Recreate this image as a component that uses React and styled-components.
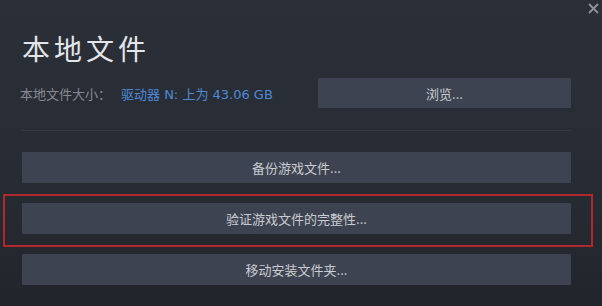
import styled, { createGlobalStyle } from "styled-components";

const GlobalStyle = createGlobalStyle`
  html, body {
    margin: 0;
    padding: 0;
    background: #262a31;
  }
  * {
    box-sizing: border-box;
  }
`;

const Window = styled.div`
  position: relative;
  width: 602px;
  height: 306px;
  overflow: hidden;
  padding: 30px 31px 0 22px;
  background: linear-gradient(180deg, #2b2f38 0%, #282c34 50%, #22252b 100%);
  font-family: "Noto Sans CJK SC", "Noto Sans", sans-serif;
`;

const CloseBtn = styled.button`
  position: absolute;
  top: 2px;
  right: 2px;
  width: 14px;
  height: 13px;
  padding: 0;
  border: none;
  background: none;
  display: flex;
  align-items: center;
  justify-content: center;
  cursor: pointer;
`;

const Title = styled.h1`
  margin: 0;
  font-size: 28px;
  line-height: 36px;
  font-weight: 400;
  letter-spacing: 4px;
  color: #e3e5e8;
`;

const InfoRow = styled.div`
  display: flex;
  align-items: center;
  justify-content: space-between;
  margin-top: 12px;
`;

const SizeInfo = styled.div`
  display: flex;
  align-items: center;
  font-size: 13px;
  margin-left: -2px;
`;

const Label = styled.span`
  color: #858a92;
`;

const Value = styled.span`
  color: #4d8ad6;
  margin-left: 10px;
  font-family: "DejaVu Sans", "Noto Sans CJK SC", sans-serif;
  font-size: 13px;
`;

const Button = styled.button`
  display: flex;
  align-items: center;
  justify-content: center;
  width: ${(p) => p.$width || "100%"};
  height: ${(p) => p.$height || 31}px;
  padding: 0;
  border: none;
  border-radius: 1px;
  background: #3d4350;
  color: #c9ccd1;
  font-family: "Noto Sans CJK SC", "Noto Sans", sans-serif;
  font-size: 13px;
  cursor: pointer;
  &:hover {
    background: #474e5c;
  }
`;

const Divider = styled.hr`
  margin: 22px 0 21px;
  border: none;
  height: 1px;
  background: #343842;
`;

const Actions = styled.div`
  display: flex;
  flex-direction: column;
  gap: 20px;
`;

const Highlight = styled.div`
  position: relative;
  &::after {
    content: "";
    position: absolute;
    top: -9px;
    bottom: -13px;
    left: -19px;
    right: -22px;
    border: 2px solid #b2272b;
    pointer-events: none;
  }
`;

export default function App() {
  return (
    <>
      <GlobalStyle />
      <Window>
        <CloseBtn aria-label="关闭">
          <svg width="11" height="11" viewBox="0 0 11 11">
            <path d="M1 1 L10 10 M10 1 L1 10" stroke="#8d939b" strokeWidth="1.8" />
          </svg>
        </CloseBtn>
        <Title>本地文件</Title>
        <InfoRow>
          <SizeInfo>
            <Label>本地文件大小：</Label>
            <Value>驱动器 N: 上为 43.06 GB</Value>
          </SizeInfo>
          <Button $width="253px" $height={30}>浏览...</Button>
        </InfoRow>
        <Divider />
        <Actions>
          <Button>备份游戏文件...</Button>
          <Highlight>
            <Button>验证游戏文件的完整性...</Button>
          </Highlight>
          <Button>移动安装文件夹...</Button>
        </Actions>
      </Window>
    </>
  );
}
